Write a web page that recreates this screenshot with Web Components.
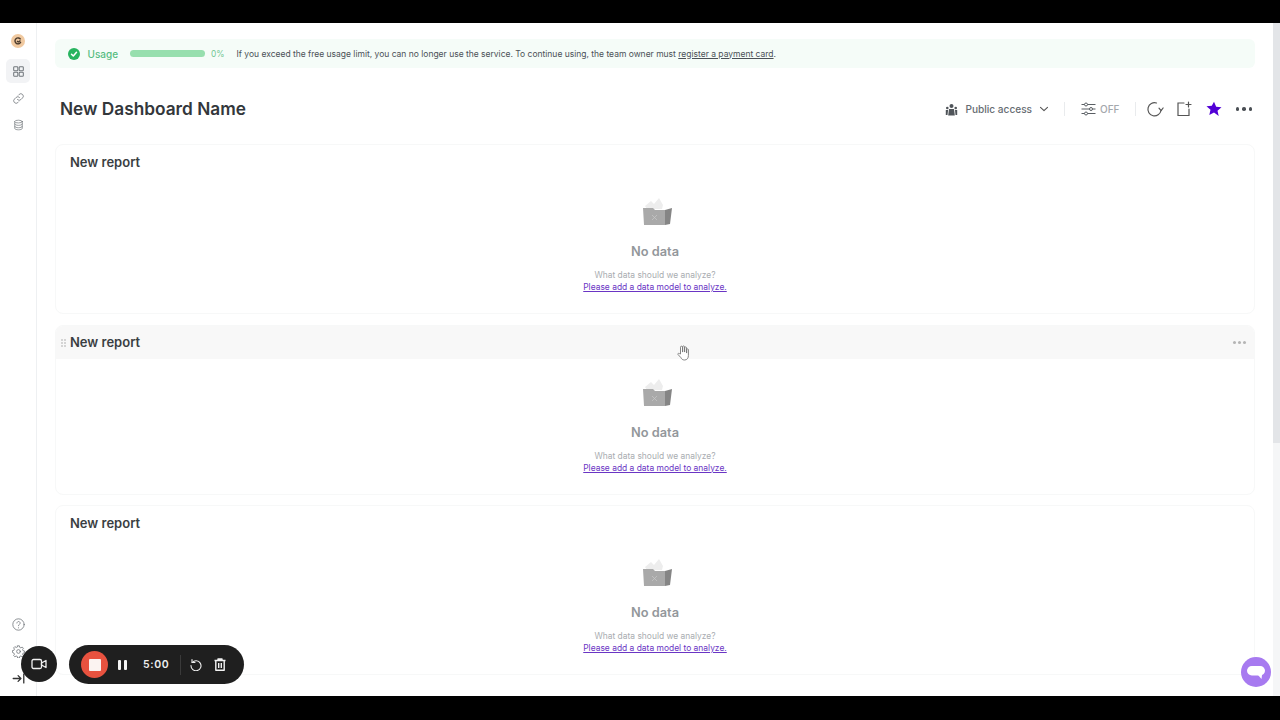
<!DOCTYPE html>
<html><head><meta charset="utf-8">
<style>
html,body{margin:0;height:100%;background:#000;overflow:hidden;font-family:Inter,"Liberation Sans",sans-serif}
body{display:flex;flex-direction:column}
app-frame{flex:none}
</style></head><body>
<app-frame></app-frame>
<script>
const ic=(s,w=16,h=16,vb)=>`<svg width="${w}" height="${h}" viewBox="${vb||`0 0 ${w} ${h}`}" fill="none" stroke="currentColor" stroke-linecap="round" stroke-linejoin="round">${s}</svg>`;
function def(name,html,init){customElements.define(name,class extends HTMLElement{constructor(){super();this.attachShadow({mode:'open'}).innerHTML=html;}connectedCallback(){init&&init(this)}})}

def('side-nav',`<style>
:host{display:flex;flex-direction:column;align-items:center;width:36px;flex:none;border-right:1px solid #eef0f2;background:#fff;box-sizing:content-box;color:#72777c}
.logo{width:14px;height:14px;border-radius:50%;background:#f0c9a0;margin-top:11px;display:grid;place-items:center}
.i{width:24px;height:24px;display:grid;place-items:center;border-radius:5px;margin-bottom:3px}
.on{background:#f2f3f5}
.top{display:flex;flex-direction:column;align-items:center;margin-top:11px}
.bot{margin-top:auto;display:flex;flex-direction:column;align-items:center;margin-bottom:3px}
</style>
<div class="logo"><svg width="8" height="8" viewBox="0 0 8 8" fill="none" stroke="#4a3a2c" stroke-width="1.4"><path d="M6.600 2.400A3 3 0 1 0 6.800 5"/><path d="M3 4l1.200 1L6.500 3.600"/></svg></div>
<div class="top">
<div class="i on">${ic('<rect x="1" y="1" width="6" height="6" rx="1.200"/><rect x="9" y="1" width="6" height="6" rx="1.200"/><rect x="1" y="9" width="6" height="6" rx="1.200"/><rect x="9" y="9" width="6" height="6" rx="1.200"/>',11,11,'0 0 16 16').replace('stroke="currentColor"','stroke="currentColor" stroke-width="1.500"')}</div>
<div class="i">${ic('<path d="M6.700 9.300a3 3 0 0 0 4.300 0l2-2A3 3 0 0 0 8.800 3l-.9.9"/><path d="M9.300 6.700a3 3 0 0 0-4.300 0l-2 2A3 3 0 0 0 7.200 13l.9-.9"/>',13,13,'0 0 16 16')}</div>
<div class="i">${ic('<ellipse cx="8" cy="3" rx="5.500" ry="2"/><path d="M2.500 3v10c0 1.100 2.500 2 5.500 2s5.500-.9 5.500-2V3"/><path d="M2.500 6.500c0 1.100 2.500 2 5.500 2s5.500-.9 5.500-2M2.500 10c0 1.100 2.500 2 5.500 2s5.500-.9 5.500-2"/>',11,12,'0 0 16 16')}</div>
</div>
<div class="bot">
<div class="i">${ic('<circle cx="8" cy="8" r="7"/><path d="M6 6.200a2 2 0 1 1 3 1.800c-.7.400-1 .8-1 1.500"/><path d="M8 12v.2"/>',13,13,'0 0 16 16')}</div>
<div class="i">${ic('<circle cx="8" cy="8" r="2.300"/><path d="M6.900 1h2.200l.4 1.900 1.400.6 1.600-1 1.500 1.500-1 1.600.6 1.400 1.900.4v2.200l-1.900.4-.6 1.400 1 1.600-1.500 1.500-1.600-1-1.400.6-.4 1.900H6.900l-.4-1.900-1.400-.6-1.600 1-1.500-1.500 1-1.600-.6-1.400L.5 9.100V6.900l1.900-.4.600-1.400-1-1.600 1.500-1.500 1.600 1 1.400-.6z"/>',13,13,'0 0 16 16')}</div>
<div class="i" style="color:#333">${ic('<path d="M1.500 8h9M7.500 4.500 11 8l-3.500 3.500M14.500 2.500v11"/>',13,13,'0 0 16 16').replace('stroke="currentColor"','stroke="currentColor" stroke-width="1.600"')}</div>
</div>`);

def('usage-bar',`<style>
:host{display:flex;align-items:center;height:29px;border-radius:6px;background:#f5fcf8;padding-left:13px;color:#4b5157;font-size:8.400px;white-space:nowrap}
.c{width:12px;height:12px;border-radius:50%;background:#27b45f;display:grid;place-items:center;flex:none}
b{font-weight:500;font-size:10px;color:#55bd80;margin-left:7.500px}
.t{width:75px;height:7px;border-radius:4px;background:#97dfae;margin-left:12px}
.p{color:#74c794;margin-left:6px}
.m{margin-left:12px;font-size:8.490px}
u{text-underline-offset:1px}
</style>
<span class="c"><svg width="8" height="8" viewBox="0 0 8 8" fill="none" stroke="#fff" stroke-width="1.500" stroke-linecap="round" stroke-linejoin="round"><path d="M1.500 4.200 3.300 6 6.500 2.300"/></svg></span>
<b>Usage</b><span class="t"></span><span class="p">0%</span>
<span class="m">If you exceed the free usage limit, you can no longer use the service. To continue using, the team owner must <u>register a payment card</u>.</span>`);

def('dash-head',`<style>
:host{display:flex;align-items:center;height:36px;padding-left:5px;color:#5d6369}
h1{margin:0;font-size:17.250px;font-weight:600;color:#33373b;margin-right:auto;line-height:36px}
.pa{display:flex;align-items:center;font-size:10.100px;font-weight:500;color:#666c72}
.pa span{margin:0 7px}
.sep{width:1px;height:14px;background:#e9ebed}
.off{display:flex;align-items:center;gap:4px;font-size:10px;font-weight:500;color:#a4a8ac}
.d{display:flex;gap:3px}.d i{width:3.500px;height:3.500px;border-radius:50%;background:#4a4f54;display:block}
svg{display:block;flex:none;overflow:visible}
</style>
<h1>New Dashboard Name</h1>
<div class="pa"><svg width="13" height="13" viewBox="0 0 13 13" fill="#50555a"><circle cx="6.500" cy="3" r="2"/><circle cx="2.300" cy="5" r="1.300"/><circle cx="10.700" cy="5" r="1.300"/><path d="M4 6h5l.8 6.500H3.200z"/><path d="M.8 7h2.300l-.6 5H.8zM10 7h2.200v5h-1.700z"/></svg><span>Public access</span>
<svg width="10" height="10" viewBox="0 0 10 10" fill="none" stroke="#555" stroke-width="1.100" stroke-linecap="round" stroke-linejoin="round"><path d="M1.500 3.300 5 6.700l3.500-3.400"/></svg></div>
<div class="sep" style="margin-left:15px"></div>
<div class="off" style="margin-left:16px"><svg width="15" height="14" viewBox="0 0 15 14" fill="none" stroke="#5a5f64" stroke-width="1"><path d="M.5 2.500h14M.5 7h14M.5 11.500h14"/><circle cx="5" cy="2.500" r="1.500" fill="#fff"/><circle cx="10" cy="7" r="1.500" fill="#fff"/><circle cx="5" cy="11.500" r="1.500" fill="#fff"/></svg>OFF</div>
<div class="sep" style="margin-left:15px"></div>
<svg style="margin-left:11px" width="16" height="16" viewBox="0 0 16 16" fill="none" stroke="#555" stroke-width="1.200" stroke-linecap="round" stroke-linejoin="round"><path d="M14 9.500A6.600 6.600 0 1 1 9.500 2"/><path d="M12 7.200l2.100 2.400 2-2.600"/></svg>
<svg style="margin-left:13px" width="16" height="16" viewBox="0 0 16 16" fill="none" stroke="#555" stroke-width="1.200" stroke-linecap="round"><path d="M8 2H2v12.500h11V8"/><path d="M12.500 1v5M10 3.500h5"/></svg>
<svg style="margin-left:14px" width="16" height="16" viewBox="0 0 16 16" fill="#5200d6"><path d="M8 .8l2.200 4.900 5.300.6-4 3.500 1.200 5.300L8 11.400l-4.700 2.700 1.200-5.300-4-3.500 5.300-.6z"/></svg>
<div class="d" style="margin-left:14px;margin-right:3px"><i></i><i></i><i></i></div>`);

def('no-data',`<style>
:host{display:flex;flex-direction:column;align-items:center;font-size:8.450px;color:#a9adb1}
svg{display:block}
b{font-size:12.800px;font-weight:600;color:#93979b;margin-top:17px;line-height:16px}
p{margin:9px 0 0;line-height:12px}
a{color:#6a35c4;text-decoration:underline;text-underline-offset:1px;line-height:12px}
</style>
<svg width="34" height="30" viewBox="0 0 34 30"><path d="M7 9l6-5 3 3 5-6 4 7-1 4H9z" fill="#ededed"/><path d="M5 11h10l2 2h10v15H6z" fill="#a9a9a9"/><path d="M27 13l7-2-2 16-5 1z" fill="#858585"/><path d="M14 18l5 5M19 18l-5 5" stroke="#c8c8c8" stroke-width=".7"/></svg>
<b>No data</b><p>What data should we analyze?</p><a>Please add a data model to analyze.</a>`);

def('report-card',`<style>
:host{display:block;height:168px;border:1px solid #f7f8f8;border-radius:8px;background:#fff;box-sizing:content-box;position:relative;overflow:hidden}
.h{height:33px;display:flex;align-items:center;padding:0 8px 0 14px;font-size:13px;font-weight:600;color:#3a3e42}
:host([hover]) .h{background:#f8f8f8}
.g{display:none;position:absolute;left:5px;top:13px}
:host([hover]) .g{display:block}
.m{display:none;margin-left:auto;gap:2px}
:host([hover]) .m{display:flex}
.m i{width:3px;height:3px;background:#b5b5b5;border-radius:50%;display:block}
no-data{margin-top:19px}
</style>
<div class="h"><svg class="g" width="6" height="8" viewBox="0 0 6 8" fill="#d4d4d4"><rect width="2" height="2"/><rect x="3" width="2" height="2"/><rect y="3" width="2" height="2"/><rect x="3" y="3" width="2" height="2"/><rect y="6" width="2" height="2"/><rect x="3" y="6" width="2" height="2"/></svg>New report<div class="m"><i></i><i></i><i></i></div></div>
<no-data></no-data>`);

def('rec-widget',`<style>
:host{position:absolute;left:21px;bottom:12px;display:flex;gap:12px;color:#fff}
.cam{width:36px;height:36px;border-radius:50%;background:#1f1f1f;display:grid;place-items:center}
.bar{height:39px;width:175px;border-radius:20px;background:#1f1f1f;display:flex;align-items:center;padding-left:12px;box-sizing:border-box;margin-top:-1px}
.stop{width:27px;height:27px;border-radius:50%;background:#e8523f;display:grid;place-items:center}
.stop i{width:12px;height:12px;background:#fbf3f1;display:block;border-radius:1px}
.p{display:flex;gap:3px;margin-left:10px}.p i{width:3px;height:10px;background:#f4f4f4;border-radius:1px;display:block}
.t{font-size:10.500px;font-weight:600;letter-spacing:.6px;margin-left:16px;color:#eee}
.s{width:1px;height:20px;background:#3a3a3a;margin-left:11px}
svg{display:block}
</style>
<div class="cam"><svg width="16" height="12" viewBox="0 0 16 12" fill="none" stroke="#f2f2f2" stroke-width="1.300" stroke-linejoin="round"><rect x="1" y="1.500" width="9.500" height="9" rx="1.500"/><path d="M10.500 5 15 2.500v7L10.500 7z"/></svg></div>
<div class="bar"><div class="stop"><i></i></div><div class="p"><i></i><i></i></div><span class="t">5:00</span><span class="s"></span>
<svg style="margin-left:9px" width="12" height="13" viewBox="0 0 12 13" fill="none" stroke="#eee" stroke-width="1.100" stroke-linecap="round" stroke-linejoin="round"><path d="M2.200 4.500A5 5 0 1 1 1 7.500"/><path d="M2 1.500v3h3"/></svg>
<svg style="margin-left:12px" width="12" height="13" viewBox="0 0 12 13" fill="none" stroke="#f2f2f2" stroke-width="1.400" stroke-linejoin="round"><path d="M.5 2.500h11M4 2.500V1h4v1.500M1.800 2.500v9.700h8.400V2.500M4.700 5v5M7.300 5v5"/></svg></div>`);

def('chat-btn',`<style>
:host{position:absolute;left:1241px;top:634px;width:30px;height:30px;border-radius:50%;background:#a77af0;display:grid;place-items:center}
</style><svg width="20" height="17" viewBox="0 0 20 17" fill="#fff"><rect x="1" y="2" width="18" height="9.500" rx="4.750"/><path d="M12 11h4l-.5 4z"/></svg>`);

def('hand-cursor',`<style>:host{position:absolute;left:677px;top:322px;width:13px;height:16px}svg{display:block}</style>
<svg width="13" height="16" viewBox="0 0 13 16" fill="#fff" stroke="#777" stroke-width=".9" stroke-linejoin="round"><path d="M3.500 9V2.200a1 1 0 0 1 2 0V7h.2V1.500a1 1 0 0 1 1.800 0V7h.2V2.500a1 1 0 0 1 1.800 0V8h.2V4.500a.9.9 0 0 1 1.700 0v6c0 2.500-1.300 4.500-3.800 4.500-2 0-3-.9-3.800-2.500L1 9.500c-.5-1 .9-1.800 1.600-.8z"/></svg>`);

def('app-frame',`<style>
:host{display:block;width:1280px;height:673px;margin-top:23px;background:#fff;position:relative;overflow:hidden}
.w{display:flex;height:100%}
main{flex:1;min-width:0;padding:16px 18px 0 18px;box-sizing:border-box;overflow:hidden;background:#fff}
.stack{display:flex;flex-direction:column;gap:10.500px}
dash-head{margin:23px 0 17px}
.sb{width:7px;flex:none;background:#f5f6f7;position:relative}
.sb i{display:block;height:420px;background:#e3e5e8}
</style>
<div class="w"><side-nav></side-nav><main><usage-bar></usage-bar><dash-head></dash-head>
<div class="stack"><report-card></report-card><report-card hover></report-card><report-card></report-card></div></main><div class="sb"><i></i></div></div>
<rec-widget></rec-widget><chat-btn></chat-btn><hand-cursor></hand-cursor>`);
</script>
</body></html>
